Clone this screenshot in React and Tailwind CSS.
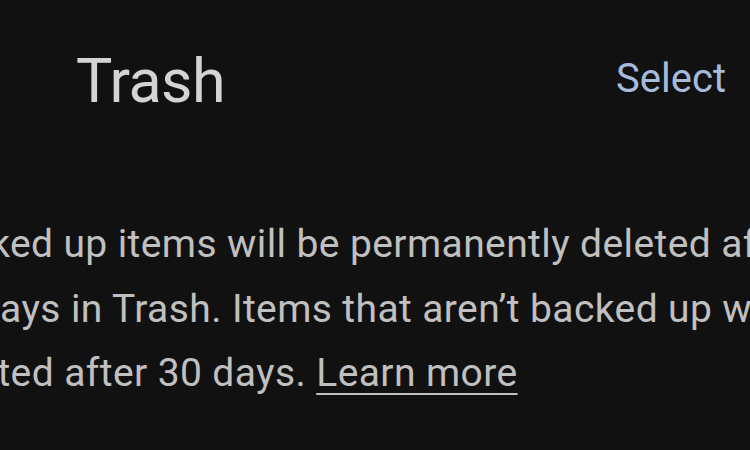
export default function App() {
  return (
    <div
      className="h-[450px] w-[750px] overflow-hidden bg-[#111111]"
      style={{ fontFamily: "Roboto, 'Liberation Sans', sans-serif" }}
    >
      <header className="flex items-start justify-between pl-[76px] pr-[24px] pt-[51px]">
        <h1 className="text-[61px] leading-none tracking-[-0.6px] text-[#d4d4d4]">
          Trash
        </h1>
        <button className="mt-[8px] text-[40px] leading-none text-[#a6badb]">
          Select
        </button>
      </header>

      <p className="-ml-[77px] mt-[100px] whitespace-nowrap text-[39px] leading-[64.5px] tracking-[0.4px] text-[#c0c0c0]">
        Backed up items will be permanently deleted after
        <br />
        60 days in Trash. Items that aren’t backed up will be
        <br />
        deleted after 30 days.{" "}
        <a className="underline decoration-2 underline-offset-[7px]">
          Learn more
        </a>
      </p>
    </div>
  );
}
